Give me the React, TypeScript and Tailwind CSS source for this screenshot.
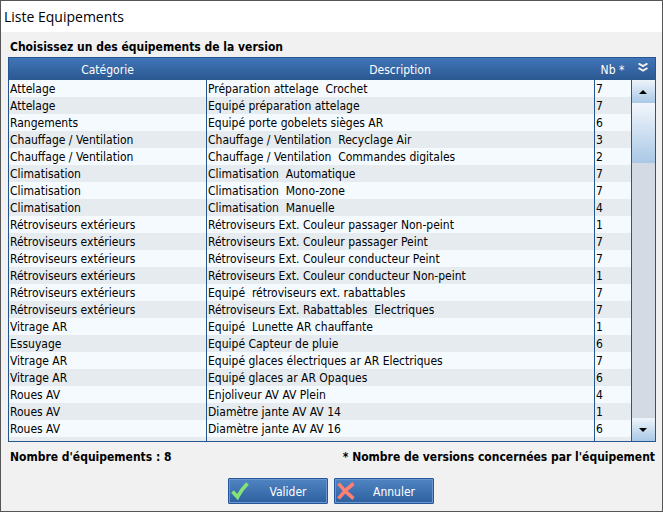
import React from "react";

const rows: [string, string, number][] = [
  ["Attelage", "Préparation attelage  Crochet", 7],
  ["Attelage", "Equipé préparation attelage", 7],
  ["Rangements", "Equipé porte gobelets sièges AR", 6],
  ["Chauffage / Ventilation", "Chauffage / Ventilation  Recyclage Air", 3],
  ["Chauffage / Ventilation", "Chauffage / Ventilation  Commandes digitales", 2],
  ["Climatisation", "Climatisation  Automatique", 7],
  ["Climatisation", "Climatisation  Mono-zone", 7],
  ["Climatisation", "Climatisation  Manuelle", 4],
  ["Rétroviseurs extérieurs", "Rétroviseurs Ext. Couleur passager Non-peint", 1],
  ["Rétroviseurs extérieurs", "Rétroviseurs Ext. Couleur passager Peint", 7],
  ["Rétroviseurs extérieurs", "Rétroviseurs Ext. Couleur conducteur Peint", 7],
  ["Rétroviseurs extérieurs", "Rétroviseurs Ext. Couleur conducteur Non-peint", 1],
  ["Rétroviseurs extérieurs", "Equipé  rétroviseurs ext. rabattables", 7],
  ["Rétroviseurs extérieurs", "Rétroviseurs Ext. Rabattables  Electriques", 7],
  ["Vitrage AR", "Equipé  Lunette AR chauffante", 1],
  ["Essuyage", "Equipé Capteur de pluie", 6],
  ["Vitrage AR", "Equipé glaces électriques ar AR Electriques", 7],
  ["Vitrage AR", "Equipé glaces ar AR Opaques", 6],
  ["Roues AV", "Enjoliveur AV AV Plein", 4],
  ["Roues AV", "Diamètre jante AV AV 14", 1],
  ["Roues AV", "Diamètre jante AV AV 16", 6],
];

function Triangle({ down = false }: { down?: boolean }) {
  return (
    <svg width="8" height="4" viewBox="0 0 8 4" aria-hidden="true">
      <path d={down ? "M0 0H8L4 4Z" : "M0 4H8L4 0Z"} fill="#000" />
    </svg>
  );
}

function ScrollBar() {
  const button =
    "flex h-[23px] shrink-0 items-center justify-center bg-linear-to-b from-[#eef4fa] to-[#a9c8e6] pr-0.5";
  return (
    <div className="flex min-h-0 flex-1 flex-col border-l border-[#25568f] bg-[#d3dae4]">
      <button type="button" aria-label="Défiler vers le haut" className={button}>
        <Triangle />
      </button>
      <div className="h-[60px] shrink-0 bg-linear-to-b from-[#f2f6fb] to-[#a9c8e6]" />
      <div className="flex-1" />
      <button type="button" aria-label="Défiler vers le bas" className={button}>
        <Triangle down />
      </button>
    </div>
  );
}

function ActionButton({ label, children }: { label: string; children: React.ReactNode }) {
  return (
    <button
      type="button"
      className="flex h-[26px] w-[100px] items-center rounded-[1px] border border-[#25569a] bg-linear-to-b from-[#5084c2] to-[#2d609f] pl-0.5 text-white shadow-[inset_0_0_0_1px_#6d97cc]"
    >
      {children}
      <span className="flex-1 pt-px text-center">{label}</span>
    </button>
  );
}

export default function App() {
  const head = "h-[22px] p-0 pt-px text-center font-normal";
  const cell = "h-[17px] overflow-hidden p-0 pt-px pl-px leading-[16px] whitespace-pre";
  const ruled = "h-[17px] overflow-hidden border-l border-[#25568f] p-0 pt-px pl-px leading-[16px] whitespace-pre";
  return (
    <div className="flex h-screen flex-col border border-[#555] bg-[#f1f1f1] font-['DejaVu_Sans_Condensed','DejaVu_Sans',sans-serif] text-[12px] leading-[16px] text-black">
      <header className="flex h-[31px] items-center bg-white pl-[3px]">
        <h1 className="[font-family:'Open_Sans','Noto_Sans',sans-serif] text-[14px]">Liste Equipements</h1>
      </header>
      <main className="flex min-h-0 flex-1 flex-col pr-[6px] pl-[7px]">
        <h2 className="pt-[7px] pb-[2px] pl-0.5 font-bold">Choisissez un des équipements de la version</h2>
        <div className="flex min-h-0 flex-1 border border-[#25568f]">
          <div className="min-w-0 flex-1 overflow-hidden">
            <table className="w-full table-fixed border-separate border-spacing-0">
              <colgroup>
                <col className="w-[197px]" />
                <col />
                <col className="w-[37px]" />
              </colgroup>
              <thead>
                <tr className="bg-linear-to-b from-[#4175b8] to-[#2a5890] text-white">
                  <th className={head}>Catégorie</th>
                  <th className={head}>Description</th>
                  <th className={head}>Nb *</th>
                </tr>
              </thead>
              <tbody>
                {rows.map(([category, description, count], i) => (
                  <tr key={i} className="bg-[#f5faff] even:bg-[#e6ebef]">
                    <td className={cell}>{category}</td>
                    <td className={ruled}>{description}</td>
                    <td className={ruled}>{count}</td>
                  </tr>
                ))}
                <tr className="bg-[#e6ebef]">
                  <td className={cell} />
                  <td className={ruled} />
                  <td className={ruled} />
                </tr>
              </tbody>
            </table>
          </div>
          <div className="flex w-6 shrink-0 flex-col">
            <button
              type="button"
              aria-label="Options des colonnes"
              className="flex h-[22px] shrink-0 items-center justify-center bg-linear-to-b from-[#4175b8] to-[#2a5890] pb-1"
            >
              <svg width="10" height="9" viewBox="0 0 10 9" fill="none" stroke="#f4f0e8" strokeWidth="2" aria-hidden="true">
                <path d="M0.5 0.5L5 3L9.5 0.5M0.5 5L5 7.5L9.5 5" />
              </svg>
            </button>
            <ScrollBar />
          </div>
        </div>
        <div className="flex justify-between pt-[7px] pr-px pl-0.5 font-bold">
          <p>Nombre d'équipements : 8</p>
          <p>* Nombre de versions concernées par l'équipement</p>
        </div>
        <div className="flex justify-center gap-1.5 pt-[13px] pr-0.5 pb-[7px]">
          <ActionButton label="Valider">
            <svg width="18" height="18" viewBox="0 0 18 18" fill="none" stroke="#84e276" strokeWidth="3.8" aria-hidden="true">
              <path d="M1.5 9.5L6.5 15Q10 8 16.5 1.5" />
            </svg>
          </ActionButton>
          <ActionButton label="Annuler">
            <svg width="18" height="18" viewBox="0 0 18 18" fill="none" stroke="#ff7f72" strokeWidth="3.6" aria-hidden="true">
              <path d="M1.5 1.5Q8 10 16.5 16.5M16.5 1.5Q8 8 1.5 16.5" />
            </svg>
          </ActionButton>
        </div>
      </main>
    </div>
  );
}
